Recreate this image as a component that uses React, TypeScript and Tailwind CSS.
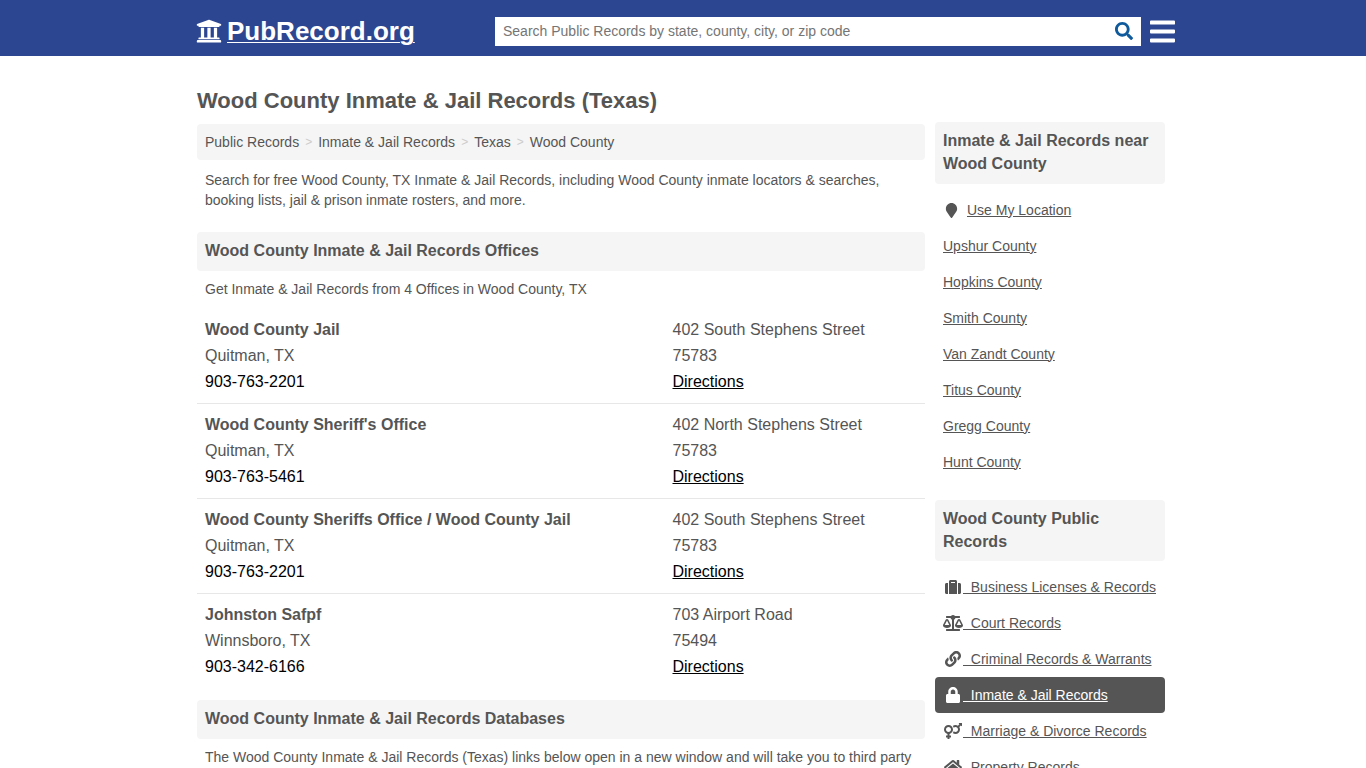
import { FaUniversity, FaSearch, FaBars, FaMapMarker, FaSuitcase, FaBalanceScale, FaLink, FaLock, FaVenusMars, FaHome } from "react-icons/fa";

const offices = [
  { name: "Wood County Jail", city: "Quitman, TX", phone: "903-763-2201", street: "402 South Stephens Street", zip: "75783" },
  { name: "Wood County Sheriff's Office", city: "Quitman, TX", phone: "903-763-5461", street: "402 North Stephens Street", zip: "75783" },
  { name: "Wood County Sheriffs Office / Wood County Jail", city: "Quitman, TX", phone: "903-763-2201", street: "402 South Stephens Street", zip: "75783" },
  { name: "Johnston Safpf", city: "Winnsboro, TX", phone: "903-342-6166", street: "703 Airport Road", zip: "75494" },
];

const nearby = ["Upshur County", "Hopkins County", "Smith County", "Van Zandt County", "Titus County", "Gregg County", "Hunt County"];

const publicRecords = [
  { label: "Business Licenses & Records", Icon: FaSuitcase },
  { label: "Court Records", Icon: FaBalanceScale },
  { label: "Criminal Records & Warrants", Icon: FaLink },
  { label: "Inmate & Jail Records", Icon: FaLock, active: true },
  { label: "Marriage & Divorce Records", Icon: FaVenusMars },
  { label: "Property Records", Icon: FaHome },
];

const crumbs = ["Public Records", "Inmate & Jail Records", "Texas", "Wood County"];

export default function App() {
  return (
    <div className="h-screen overflow-hidden bg-white font-['Liberation_Sans',Arial,sans-serif] text-[14px] text-[#555]">
      {/* Header */}
      <header className="h-14 bg-[#2c4691]">
        <div className="ml-[196px] flex h-14 w-[980px] items-center pt-[6px]">
          <a href="#" className="flex w-[299px] items-center text-white">
            <FaUniversity className="mr-[5px] h-[26px] w-[26px]" />
            <span className="text-[26px] leading-[32px] font-bold underline decoration-1 underline-offset-2">PubRecord.org</span>
          </a>
          <div className="flex h-[29px] w-[646px] items-center justify-between bg-white pr-[8px] pl-2">
            <span className="pt-[1px] text-[14px] text-[#757575]">Search Public Records by state, county, city, or zip code</span>
            <FaSearch className="h-[18px] w-[18px] text-[#0f5a9c]" />
          </div>
          <FaBars className="ml-[9px] h-[29px] w-[25px] text-white" />
        </div>
      </header>

      <div className="ml-[197px] w-[968px]">
        <h1 className="pt-[31px] text-[22px] leading-[27px] font-bold">Wood County Inmate &amp; Jail Records (Texas)</h1>

        <div className="flex gap-[10px]">
          {/* Main column */}
          <main className="w-[728px] pt-[10px]">
            <nav className="flex h-9 items-center rounded bg-[#f5f5f5] px-2">
              {crumbs.map((c, i) => (
                <span key={c} className="flex items-center">
                  {i > 0 && <span className="px-[6px] text-[12px] text-[#ccc]">&gt;</span>}
                  <span>{c}</span>
                </span>
              ))}
            </nav>
            <p className="px-2 pt-[10px] leading-5">
              Search for free Wood County, TX Inmate &amp; Jail Records, including Wood County inmate locators &amp; searches, booking lists, jail &amp; prison inmate rosters, and more.
            </p>

            <h2 className="mt-[22px] flex h-[39px] items-center rounded bg-[#f5f5f5] px-2 pb-[2px] text-[16px] font-bold">Wood County Inmate &amp; Jail Records Offices</h2>
            <p className="px-2 pt-2 leading-5">Get Inmate &amp; Jail Records from 4 Offices in Wood County, TX</p>

            <div className="pt-[10px]">
              {offices.map((o, i) => (
                <div key={i} className={`flex px-2 pt-[8px] pb-[8px] text-[16px] leading-[26px] ${i < offices.length - 1 ? "border-b border-[#e7e7e7]" : ""}`}>
                  <div className="w-[467.5px]">
                    <div className="font-bold">{o.name}</div>
                    <div>{o.city}</div>
                    <div className="text-black">{o.phone}</div>
                  </div>
                  <div>
                    <div>{o.street}</div>
                    <div>{o.zip}</div>
                    <a href="#" className="text-black underline">Directions</a>
                  </div>
                </div>
              ))}
            </div>

            <h2 className="mt-[12px] flex h-[39px] items-center rounded bg-[#f5f5f5] px-2 pb-[2px] text-[16px] font-bold">Wood County Inmate &amp; Jail Records Databases</h2>
            <p className="px-2 pt-2 leading-5">
              The Wood County Inmate &amp; Jail Records (Texas) links below open in a new window and will take you to third party websites that provide access to Wood County public records.
            </p>
          </main>

          {/* Sidebar */}
          <aside className="mt-[-2px] w-[230px] pt-[10px]">
            <h3 className="rounded bg-[#f5f5f5] px-2 pt-[7px] pb-[9px] text-[16px] leading-[23px] font-bold">Inmate &amp; Jail Records near Wood County</h3>
            <div className="pt-2">
              <a href="#" className="flex h-9 items-center px-2 underline">
                <FaMapMarker className="mr-[9px] ml-[2px] h-[15px] w-[13px]" />
                Use My Location
              </a>
              {nearby.map((n) => (
                <a key={n} href="#" className="flex h-9 items-center px-2 underline">{n}</a>
              ))}
            </div>
            <h3 className="mt-[20px] rounded bg-[#f5f5f5] px-2 pt-[7px] pb-[8px] text-[16px] leading-[23px] font-bold">Wood County Public Records</h3>
            <div className="pt-2">
              {publicRecords.map(({ label, Icon, active }) => (
                <a
                  key={label}
                  href="#"
                  className={`flex h-9 items-center rounded px-2 underline ${active ? "bg-[#555] text-white" : ""}`}
                >
                  <Icon className="h-[16px] w-[20px] shrink-0" />
                  <span className="whitespace-pre">{"  " + label}</span>
                </a>
              ))}
            </div>
          </aside>
        </div>
      </div>
    </div>
  );
}
